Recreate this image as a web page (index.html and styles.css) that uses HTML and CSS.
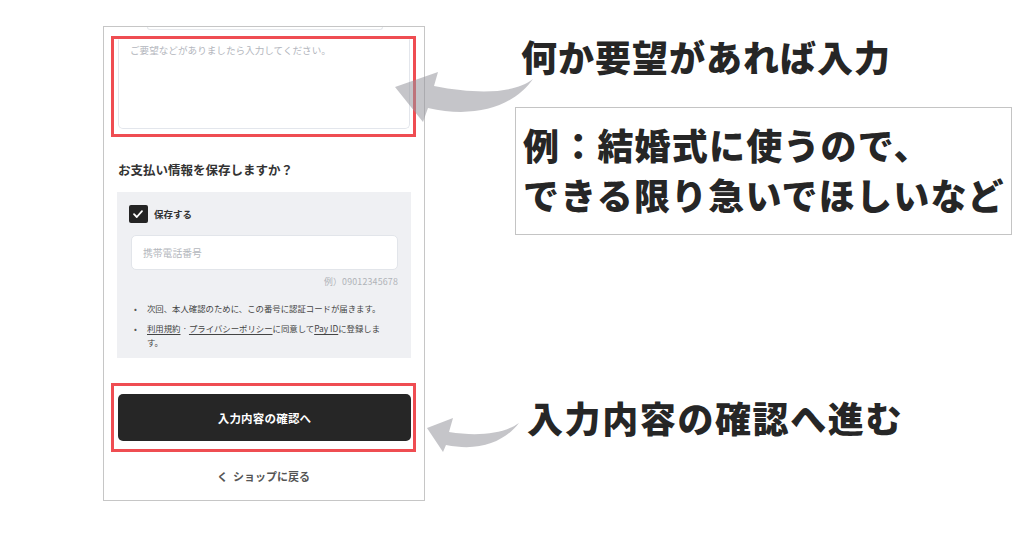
FILE: index.html
```html
<!DOCTYPE html>
<html lang="ja">
<head>
<meta charset="utf-8">
<title>注文フォーム</title>
<link rel="stylesheet" href="styles.css">
</head>
<body>
<div class="page">
  <div class="phone">
    <div class="prev-field"></div>
    <div class="mark mark-note">
      <div class="textarea">ご要望などがありましたら入力してください。</div>
    </div>
    <h2 class="save-title">お支払い情報を保存しますか？</h2>
    <div class="panel">
      <div class="check-row">
        <span class="checkbox">
          <svg width="18" height="18" viewBox="0 0 18 18"><path d="M5 9.2 L7.8 12 L13 6.2" fill="none" stroke="#fff" stroke-width="1.8" stroke-linecap="round" stroke-linejoin="round"/></svg>
        </span>
        <span class="check-label">保存する</span>
      </div>
      <div class="phone-input">携帯電話番号</div>
      <div class="example">例）09012345678</div>
      <ul class="notes-list">
        <li><span class="dot">•</span><span class="note-text">次回、本人確認のために、この番号に認証コードが届きます。</span></li>
        <li><span class="dot">•</span><div class="note-text"><span class="link">利用規約</span><span class="plain"> · </span><span class="link">プライバシーポリシー</span><span class="plain">に同意して</span><span class="link">Pay ID</span><span class="plain">に登録しま</span><br><span class="plain">す。</span></div></li>
      </ul>
    </div>
    <div class="mark mark-btn">
      <div class="confirm-btn">入力内容の確認へ</div>
    </div>
    <div class="back-link">く&nbsp;&nbsp;ショップに戻る</div>
  </div>

  <div class="annotations">
    <p class="callout callout-1">何か要望があれば入力</p>
    <div class="example-box">例：結婚式に使うので、<br>できる限り急いでほしいなど</div>
    <p class="callout callout-2">入力内容の確認へ進む</p>
  </div>

  <svg class="arrows" width="1024" height="538" viewBox="0 0 1024 538">
    <path d="M533 79 C515 93 480 95 434 86 L438 72 L395 87 L423 122 L428 108 C476 119 514 106 533 79 Z" fill="rgba(150,150,156,0.55)"/>
    <path d="M519 423 C505 433 480 437 449 432 L453 418 L427 428 L443 452 L446 445 C481 452 505 441 519 423 Z" fill="rgba(150,150,156,0.55)"/>
  </svg>
</div>
</body>
</html>
```

FILE: styles.css
```css
* { box-sizing: border-box; }

html, body {
  margin: 0;
  padding: 0;
  background: #ffffff;
}

body {
  width: 1024px;
  height: 538px;
  overflow: hidden;
  font-family: "Noto Sans CJK JP", "Noto Sans", sans-serif;
  color: #333;
}

.page {
  position: relative;
  display: flex;
  align-items: flex-start;
  padding: 26px 0 0 103px;
  height: 538px;
}

/* ---------- phone screenshot ---------- */
.phone {
  width: 322px;
  height: 475px;
  border: 1px solid #c6c6c6;
  padding: 0 8px 0 7px;
  display: flex;
  flex-direction: column;
  background: #fff;
}

.prev-field {
  height: 3px;
  margin: 0 33px 6px 36px;
  border: 1px solid #e6e8ec;
  border-top: none;
  border-radius: 0 0 8px 8px;
}

.mark {
  border: 3px solid #ef4d52;
}

.mark-note {
  padding: 0 3px 5px 4px;
}

.textarea {
  height: 90px;
  border: 1px solid #e3e6ec;
  border-top-color: transparent;
  border-radius: 0 0 5px 5px;
  padding: 4px 11px 0;
  font-size: 9.6px;
  line-height: 12px;
  color: #b3b6bd;
  white-space: nowrap;
}

.save-title {
  margin: 24px 0 0 7px;
  font-size: 12.5px;
  line-height: 18px;
  font-weight: 700;
  color: #333;
}

.panel {
  margin: 13px 5px 0 6px;
  background: #eff0f3;
  padding: 13px 13px 9px 14px;
}

.check-row {
  display: flex;
  align-items: center;
  height: 18px;
  margin-left: -2px;
}

.checkbox {
  width: 19px;
  height: 18px;
  background: #242424;
  border-radius: 2px;
  display: flex;
}

.check-label {
  margin-left: 6px;
  font-size: 9.5px;
  font-weight: 700;
  color: #333;
}

.phone-input {
  margin-top: 12px;
  height: 35px;
  background: #fff;
  border: 1px solid #e2e5ea;
  border-radius: 5px;
  padding: 0 11px;
  display: flex;
  align-items: center;
  font-size: 9.8px;
  color: #b4b7bd;
}

.example {
  margin-top: 6px;
  text-align: right;
  font-size: 8.8px;
  line-height: 12px;
  color: #b0b3b8;
  letter-spacing: 0.2px;
}

.notes-list {
  list-style: none;
  margin: 13px 0 0;
  padding: 0;
  font-size: 8.4px;
  line-height: 14px;
  color: #444;
}

.notes-list li {
  display: flex;
}

.notes-list li + li {
  margin-top: 6px;
}

.note-text {
  max-width: 240px;
}

.link {
  text-decoration: underline;
  text-underline-offset: 2px;
}

.dot {
  flex: 0 0 16px;
  padding-left: 3px;
  color: #555;
}

.mark-btn {
  margin-top: 25px;
  padding: 8px 2px 8px 4px;
}

.confirm-btn {
  height: 47px;
  border-radius: 5px;
  background: #262626;
  color: #fff;
  display: flex;
  align-items: center;
  justify-content: center;
  font-size: 11.5px;
  font-weight: 700;
  letter-spacing: 0.2px;
}

.back-link {
  margin-top: 16px;
  line-height: 16px;
  text-align: center;
  font-size: 11px;
  font-weight: 700;
  color: #555;
}

/* ---------- annotations ---------- */
.annotations {
  margin-left: 90px;
  display: flex;
  flex-direction: column;
  align-items: flex-start;
  color: #262626;
}

.callout {
  margin: 0;
  font-size: 36px;
  line-height: 44px;
  font-weight: 900;
  letter-spacing: 1px;
  white-space: nowrap;
}

.callout-1 {
  margin: 8px 0 0 6px;
}

.example-box {
  margin-top: 29px;
  width: 497px;
  height: 128px;
  border: 1px solid #c4c4c4;
  padding: 11px 0 0 7px;
  font-size: 36px;
  line-height: 50px;
  font-weight: 900;
  letter-spacing: 1.2px;
  white-space: nowrap;
}

.callout-2 {
  margin: 160px 0 0 12px;
  letter-spacing: 1.6px;
}

.arrows {
  position: absolute;
  left: 0;
  top: 0;
  pointer-events: none;
}
```
